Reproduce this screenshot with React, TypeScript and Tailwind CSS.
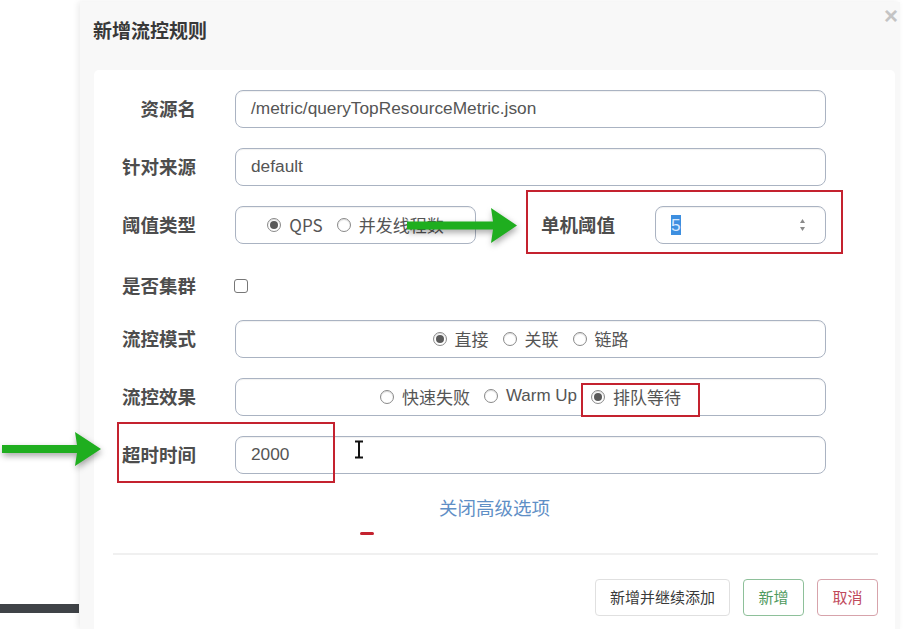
import React from "react";

const CJK = '"Noto Sans CJK SC", "Liberation Sans", sans-serif';
const SANS = '"Liberation Sans", "Noto Sans CJK SC", sans-serif';

function Radio({ checked, label }: { checked?: boolean; label: string }) {
  return (
    <span className="inline-flex items-center gap-[8px]">
      <span className="w-[14px] h-[14px] rounded-full border border-[#8a8a8a] bg-white flex items-center justify-center shadow-[inset_0_1px_1px_rgba(0,0,0,0.15)]">
        {checked && <span className="w-[8px] h-[8px] rounded-full bg-[#5a5a5a]" />}
      </span>
      <span>{label}</span>
    </span>
  );
}

function Label({ children }: { children: React.ReactNode }) {
  return (
    <div
      className="w-[102px] shrink-0 text-right text-[18.5px] font-bold text-[#4d4d4d] mr-[39px]"
      style={{ fontFamily: CJK }}
    >
      {children}
    </div>
  );
}

const boxCls =
  "h-[38px] rounded-[8px] border border-[#aab3c2] bg-white shadow-[inset_0_1px_1px_rgba(0,0,0,0.06)] flex items-center text-[17.3px] text-[#555]";

function GreenArrow({ w, h }: { w: number; h: number }) {
  const mid = h / 2;
  return (
    <svg width={w} height={h} viewBox={`0 0 ${w} ${h}`} style={{ filter: "drop-shadow(1px 3px 3px rgba(0,0,0,0.35))" }}>
      <polygon
        points={`0,${mid - 4} ${w - 24},${mid - 4} ${w - 26},0 ${w},${mid} ${w - 26},${h} ${w - 24},${mid + 4} 0,${mid + 4}`}
        fill="#1fae1f"
      />
    </svg>
  );
}

export default function App() {
  return (
    <div className="relative w-[903px] h-[629px] overflow-hidden bg-white" style={{ fontFamily: SANS }}>
      <div className="flex h-full">
        {/* left page area */}
        <div className="w-[80px] shrink-0 flex flex-col">
          <div className="flex-1" />
          <div className="h-[9px] bg-[#3f4347] mb-[16px] w-[79px]" />
        </div>
        {/* dialog */}
        <div className="w-[820px] mt-[2px] bg-[#f8f8f8] shadow-[-2px_0_6px_rgba(0,0,0,0.08)] flex flex-col">
          <div className="h-[68px] flex items-start justify-between pl-[13px] pr-[2px]">
            <div className="mt-[14px] text-[19px] font-bold text-[#383838]" style={{ fontFamily: CJK }}>
              新增流控规则
            </div>
            <div className="mt-[0px] text-[24px] leading-[28px] text-[#c4c4c4] font-bold">×</div>
          </div>
          <div className="ml-[14px] mr-[5px] flex-1 bg-white rounded-t-[5px] pt-[20px]">
            {/* rows */}
            <div className="flex flex-col gap-[20px] pr-[69px]">
              <div className="flex items-center">
                <Label>资源名</Label>
                <div className={`${boxCls} flex-1 pl-[15px]`}>/metric/queryTopResourceMetric.json</div>
              </div>
              <div className="flex items-center">
                <Label>针对来源</Label>
                <div className={`${boxCls} flex-1 pl-[15px]`}>default</div>
              </div>
              <div className="flex items-center">
                <Label>阈值类型</Label>
                <div className={`${boxCls} w-[241px] justify-center gap-[14px]`} style={{ fontFamily: CJK, fontSize: 17 }}>
                  <Radio checked label="QPS" />
                  <Radio label="并发线程数" />
                </div>
                <div className="ml-[65px] text-[18.5px] font-bold text-[#4d4d4d]" style={{ fontFamily: CJK }}>
                  单机阈值
                </div>
                <div className={`${boxCls} ml-auto w-[171px] pl-[15px] pr-[19px] justify-between`}>
                  <span className="bg-[#3d8fe0] text-[#d6e8ff] leading-[20px] px-[0px]">5</span>
                  <svg width="7" height="14" viewBox="0 0 7 14">
                    <polygon points="3.5,1 6,5 1,5" fill="#8a8a8a" />
                    <polygon points="3.5,13 6,9 1,9" fill="#8a8a8a" />
                  </svg>
                </div>
              </div>
              <div className="flex items-center h-[36px] pt-[7px]">
                <Label>是否集群</Label>
                <span className="w-[14px] h-[14px] -ml-[1px] rounded-[3px] border border-[#777] bg-white" />
              </div>
              <div className="flex items-center">
                <Label>流控模式</Label>
                <div className={`${boxCls} flex-1 justify-center gap-[14px]`} style={{ fontFamily: CJK, fontSize: 17 }}>
                  <Radio checked label="直接" />
                  <Radio label="关联" />
                  <Radio label="链路" />
                </div>
              </div>
              <div className="flex items-center">
                <Label>流控效果</Label>
                <div className={`${boxCls} flex-1 justify-center gap-[14px]`} style={{ fontFamily: CJK, fontSize: 17 }}>
                  <Radio label="快速失败" />
                  <span style={{ fontFamily: SANS, fontSize: 17 }}>
                    <Radio label="Warm Up" />
                  </span>
                  <Radio checked label="排队等待" />
                </div>
              </div>
              <div className="flex items-center">
                <Label>超时时间</Label>
                <div className={`${boxCls} flex-1 pl-[15px]`}>2000</div>
              </div>
            </div>
            <div className="mt-[20px] text-center text-[18.5px] text-[#5f8fc6] leading-[26px]" style={{ fontFamily: CJK }}>
              关闭高级选项
            </div>
            <div className="mt-[33px] ml-[19px] mr-[17px] h-[2px] bg-[#f0f0f0]" />
            <div className="mt-[24px] mr-[17px] flex justify-end gap-[13px] text-[15px]" style={{ fontFamily: CJK }}>
              <div className="h-[37px] w-[135px] rounded-[4px] border border-[#e0e0e0] text-[#3a3a3a] flex items-center justify-center">
                新增并继续添加
              </div>
              <div className="h-[37px] w-[61px] rounded-[4px] border border-[#8ec09a] text-[#4e9a5e] flex items-center justify-center">
                新增
              </div>
              <div className="h-[37px] w-[61px] rounded-[4px] border border-[#d7a3ab] text-[#c04a5c] flex items-center justify-center">
                取消
              </div>
            </div>
          </div>
        </div>
      </div>

      {/* annotations */}
      <div className="absolute left-[526px] top-[190px] w-[317px] h-[64px] border-2 border-[#c4222f]" />
      <div className="absolute left-[117px] top-[422px] w-[218px] h-[61px] border-2 border-[#c4222f]" />
      <div className="absolute left-[581px] top-[383px] w-[119px] h-[34px] border-2 border-[#c4222f]" />
      <div className="absolute left-[407px] top-[208px]">
        <GreenArrow w={110} h={35} />
      </div>
      <div className="absolute left-[2px] top-[432px]">
        <GreenArrow w={99} h={34} />
      </div>
      <div className="absolute left-[360px] top-[532px] w-[14px] h-[3px] rounded-full bg-[#c4222f]" />
      <svg className="absolute left-[353px] top-[440px]" width="12" height="19" viewBox="0 0 12 19">
        <path d="M1,1 H11 M6,1 V18 M1,18 H11" stroke="#fff" strokeWidth="4" />
        <path d="M2,1.5 H10 M6,1.5 V17.5 M2,17.5 H10" stroke="#111" strokeWidth="2" />
      </svg>
    </div>
  );
}
